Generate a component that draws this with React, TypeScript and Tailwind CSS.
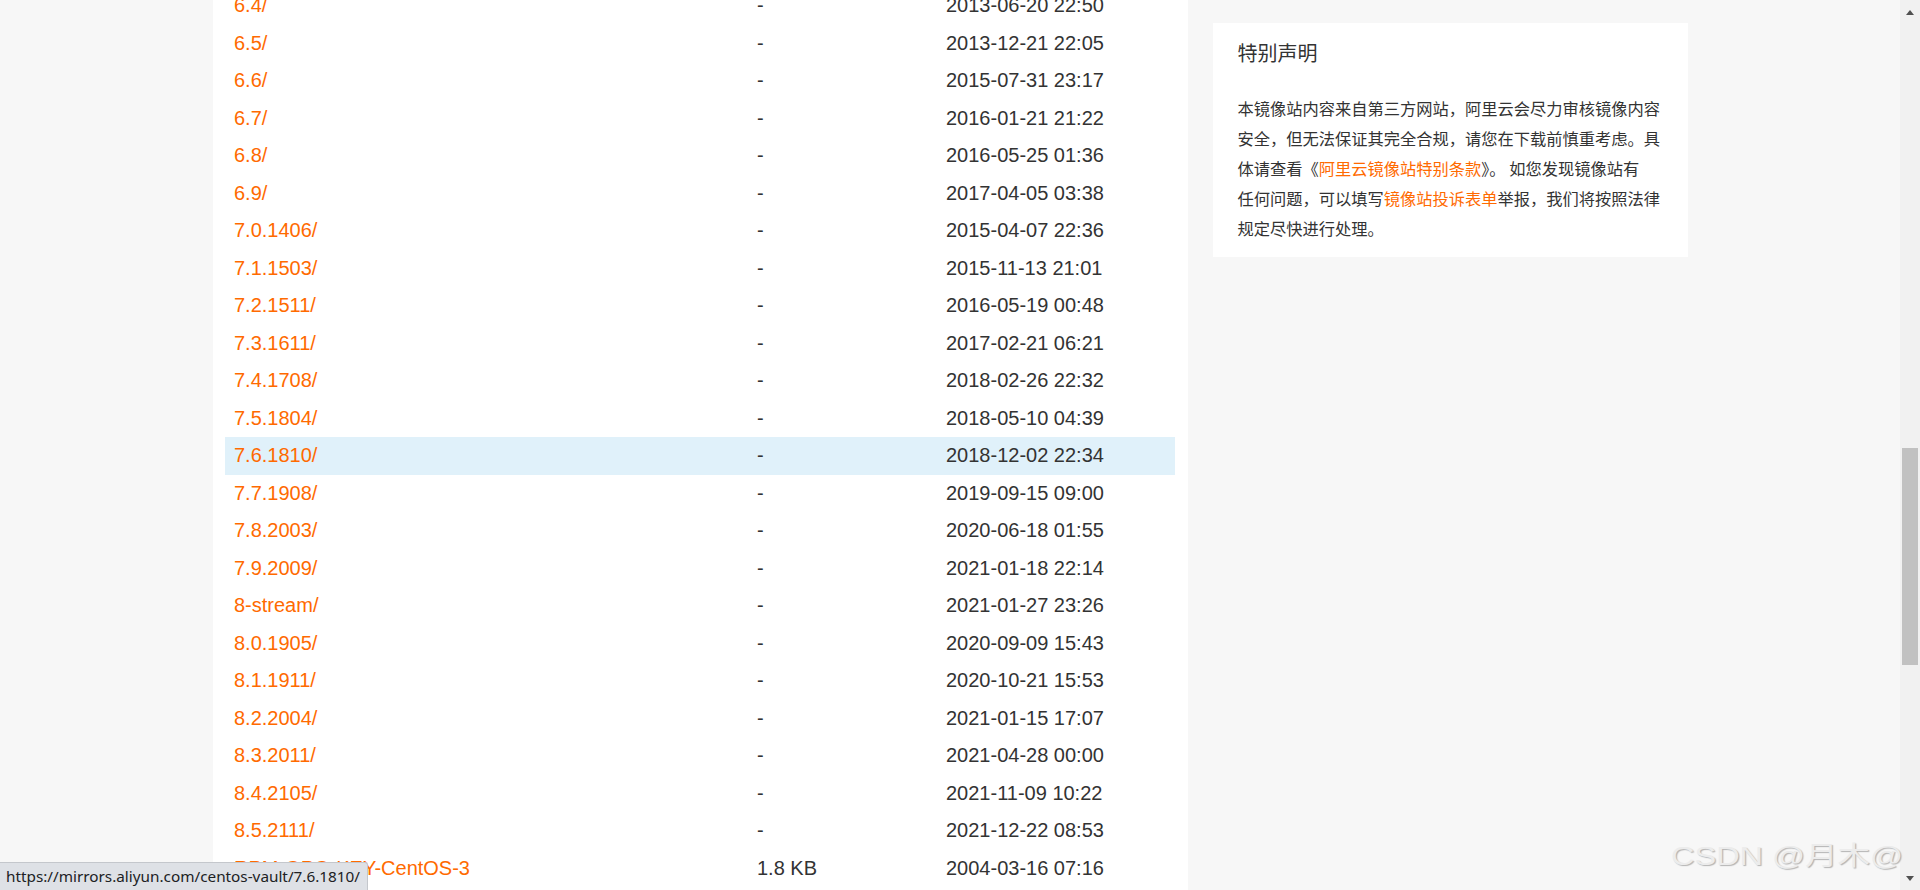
const ROWS: { name: string; size: string; date: string; active?: boolean }[] = [
  { name: "6.4/", size: "-", date: "2013-06-20 22:50" },
  { name: "6.5/", size: "-", date: "2013-12-21 22:05" },
  { name: "6.6/", size: "-", date: "2015-07-31 23:17" },
  { name: "6.7/", size: "-", date: "2016-01-21 21:22" },
  { name: "6.8/", size: "-", date: "2016-05-25 01:36" },
  { name: "6.9/", size: "-", date: "2017-04-05 03:38" },
  { name: "7.0.1406/", size: "-", date: "2015-04-07 22:36" },
  { name: "7.1.1503/", size: "-", date: "2015-11-13 21:01" },
  { name: "7.2.1511/", size: "-", date: "2016-05-19 00:48" },
  { name: "7.3.1611/", size: "-", date: "2017-02-21 06:21" },
  { name: "7.4.1708/", size: "-", date: "2018-02-26 22:32" },
  { name: "7.5.1804/", size: "-", date: "2018-05-10 04:39" },
  { name: "7.6.1810/", size: "-", date: "2018-12-02 22:34", active: true },
  { name: "7.7.1908/", size: "-", date: "2019-09-15 09:00" },
  { name: "7.8.2003/", size: "-", date: "2020-06-18 01:55" },
  { name: "7.9.2009/", size: "-", date: "2021-01-18 22:14" },
  { name: "8-stream/", size: "-", date: "2021-01-27 23:26" },
  { name: "8.0.1905/", size: "-", date: "2020-09-09 15:43" },
  { name: "8.1.1911/", size: "-", date: "2020-10-21 15:53" },
  { name: "8.2.2004/", size: "-", date: "2021-01-15 17:07" },
  { name: "8.3.2011/", size: "-", date: "2021-04-28 00:00" },
  { name: "8.4.2105/", size: "-", date: "2021-11-09 10:22" },
  { name: "8.5.2111/", size: "-", date: "2021-12-22 08:53" },
  { name: "RPM-GPG-KEY-CentOS-3", size: "1.8 KB", date: "2004-03-16 07:16" },
  { name: "RPM-GPG-KEY-CentOS-4", size: "1.7 KB", date: "2005-02-28 19:23" },
];

function FileTable() {
  return (
    <div className="-mt-[13px]">
      {ROWS.map((row) => (
        <div
          key={row.name}
          className={`grid h-[37.5px] grid-cols-[523px_189px_238px] items-center leading-[37.5px] text-[20px] ${
            row.active ? "bg-[#e0f1fa]" : ""
          }`}
        >
          <a className="pl-[9px] text-[#ff6a00] whitespace-nowrap">{row.name}</a>
          <span className="pl-[9px] text-[#333]">{row.size}</span>
          <span className="pl-[9px] text-[#333]">{row.date}</span>
        </div>
      ))}
    </div>
  );
}

function NoticeCard() {
  return (
    <div className="bg-white px-[25px] pt-[15px] pb-[14px] font-['Noto_Sans_CJK_SC',sans-serif] text-[#333]">
      <h2 className="h-[30px] text-[20px] leading-[30px] font-normal">特别声明</h2>
      <p className="mt-[25px] w-[425px] text-[16.25px] leading-[30px] whitespace-nowrap">
        本镜像站内容来自第三方网站，阿里云会尽力审核镜像内容
        <br />
        安全，但无法保证其完全合规，请您在下载前慎重考虑。具
        <br />
        体请查看《<a className="text-[#ff6a00]">阿里云镜像站特别条款</a>》。 如您发现镜像站有
        <br />
        任何问题，可以填写<a className="text-[#ff6a00]">镜像站投诉表单</a>举报，我们将按照法律
        <br />
        规定尽快进行处理。
      </p>
    </div>
  );
}

function Scrollbar() {
  return (
    <div className="flex w-5 shrink-0 flex-col bg-[#f1f1f1]">
      <div className="flex h-[24px] items-center justify-center">
        <div className="h-0 w-0 border-x-[4.5px] border-b-[5px] border-x-transparent border-b-[#505050]" />
      </div>
      <div className="mx-[2px] mt-[424px] h-[217px] bg-[#c1c1c1]" />
      <div className="flex-1" />
      <div className="flex h-[24px] items-center justify-center">
        <div className="h-0 w-0 border-x-[4.5px] border-t-[5px] border-x-transparent border-t-[#505050]" />
      </div>
    </div>
  );
}

export default function App() {
  return (
    <div className="relative flex h-[890px] overflow-hidden bg-[#f7f7f7] font-['Liberation_Sans',Arial,sans-serif]">
      <div className="relative flex-1 overflow-hidden">
        <div className="mx-auto flex w-[1475px] gap-[25px]">
          <main className="h-[890px] w-[975px] shrink-0 overflow-hidden bg-white px-[12.5px]">
            <FileTable />
          </main>
          <aside className="w-[475px] shrink-0 pt-[23px]">
            <NoticeCard />
          </aside>
        </div>

        <div className="absolute bottom-0 left-0 h-[28px] w-[368px] rounded-tr-[3px] border-t border-r border-[#c4c7cc] bg-[#dee1e6] pl-[6px] font-['Noto_Sans',sans-serif] text-[15.3px] leading-[27px] whitespace-nowrap text-[#202124]">
          https://mirrors.aliyun.com/centos-vault/7.6.1810/
        </div>
      </div>

      <Scrollbar />

      <div className="pointer-events-none absolute top-[834px] left-[1671px] scale-x-[1.25] origin-left font-['Liberation_Sans','Noto_Sans_CJK_SC',sans-serif] text-[26px] leading-[44px] whitespace-nowrap text-[#ececec] [text-shadow:1px_1px_1px_rgba(0,0,0,0.28)]">
        CSDN @月木@
      </div>
    </div>
  );
}
